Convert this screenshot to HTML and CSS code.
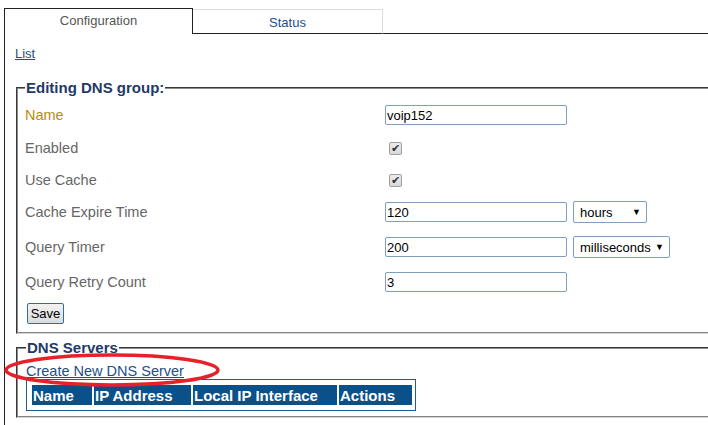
FILE: index.html
```html
<!DOCTYPE html>
<html lang="en">
<head>
  <meta charset="UTF-8" />
  <title>DNS Group</title>
  <link rel="stylesheet" href="styles.css">
</head>
<body>
  <div id="page">
    <!-- Tabs -->
    <div class="tabs">
      <div class="tab tab-active">Configuration</div>
      <div class="tab tab-idle">Status</div>
      <div class="tab-fill"></div>
    </div>

    <div class="panel">
      <a class="link list-link" href="#">List</a>

      <!-- Editing form -->
      <fieldset class="box box-edit">
        <legend>Editing DNS group:</legend>
        <div class="row row-name">
          <label class="lbl lbl-focus">Name</label>
          <input class="txt" type="text" value="voip152">
        </div>
        <div class="row">
          <label class="lbl">Enabled</label>
          <span class="chk">&#10004;</span>
        </div>
        <div class="row">
          <label class="lbl">Use Cache</label>
          <span class="chk">&#10004;</span>
        </div>
        <div class="row">
          <label class="lbl">Cache Expire Time</label>
          <input class="txt" type="text" value="120">
          <div class="sel sel-hours">hours <span class="arrow">&#9660;</span></div>
        </div>
        <div class="row row-tall">
          <label class="lbl">Query Timer</label>
          <input class="txt" type="text" value="200">
          <div class="sel sel-ms">milliseconds <span class="arrow">&#9660;</span></div>
        </div>
        <div class="row">
          <label class="lbl">Query Retry Count</label>
          <input class="txt" type="text" value="3">
        </div>
        <button class="btn">Save</button>
      </fieldset>

      <!-- DNS servers -->
      <fieldset class="box box-servers">
        <legend>DNS Servers</legend>
        <a class="link create-link" href="#">Create New DNS Server</a>
        <table class="grid">
          <tr>
            <th class="c-name">Name</th>
            <th class="c-ip">IP Address</th>
            <th class="c-if">Local IP Interface</th>
            <th class="c-act">Actions</th>
          </tr>
        </table>
        <svg class="mark" width="220" height="40" viewBox="0 0 220 40">
          <ellipse cx="110" cy="18" rx="106" ry="15" fill="none" stroke="#e8202a" stroke-width="3.5"/>
        </svg>
      </fieldset>
    </div>
  </div>
</body>
</html>
```

FILE: styles.css
```css
/* Reset & base */
html, body {
  margin: 0; padding: 0;
  background: white;
  overflow: hidden;
  font-family: "Liberation Sans", Arial, sans-serif;
}
#page {
  width: 708px; height: 425px;
  overflow: hidden;
  padding-top: 8px;
  box-sizing: border-box;
}
/* Tabs */
.tabs {
  display: flex;
  margin-left: 4px;
  height: 26px;
}
.tab {
  box-sizing: border-box;
  text-align: center;
  font-size: 13px;
}
.tab-active {
  width: 189px; height: 26px;
  border: 1px solid #222; border-bottom: none;
  color: #555;
  padding-top: 4px;
}
.tab-idle {
  width: 190px; height: 25px;
  margin-top: 1px;
  border: 1px solid #dcdce2; border-left: none;
  border-bottom: 1px solid #222;
  color: #1d4f86;
  padding-top: 5px;
}
.tab-fill {
  flex: 1;
  border-bottom: 1px solid #222;
}
/* Panel */
.panel {
  position: relative;
  margin-left: 4px;
  width: 760px;
  height: 400px;
  border-left: 1px solid #222;
  padding: 12px 0 0 10px;
  box-sizing: border-box;
}
.link {
  color: #1d4f86;
  text-decoration: underline;
}
.list-link {
  display: block;
  font-size: 13px;
  height: 15px;
}
/* Fieldsets */
.box {
  width: 720px;
  margin: 0 0 0 1px;
  border: 2px groove #d0d0d0;
  border-color: #8c8c8c #d6d6d6 #d6d6d6 #8c8c8c;
  box-sizing: border-box;
}
.box legend {
  color: #1f3a68;
  font-weight: bold;
  font-size: 15px;
  padding: 0 1px;
  margin-left: 0;
}
.box-edit {
  margin-top: 18px;
  padding: 2px 6px 8px 7px;
}
.row {
  display: flex;
  align-items: center;
  height: 32px;
}
.row-name { height: 34px; }
.row-tall { height: 38px; }
.lbl {
  width: 360px;
  color: #666;
  font-size: 14.5px;
}
.lbl-focus { color: #b88d0c; }
.txt {
  width: 182px; height: 20px;
  box-sizing: border-box;
  margin: 0;
  border: 1px solid #7f9fbf;
  border-radius: 2px;
  padding: 0 1px;
  font-family: "Liberation Sans", Arial, sans-serif;
  font-size: 13px;
  color: #000;
}
.chk {
  display: flex;
  align-items: center;
  justify-content: center;
  margin-left: 4px;
  width: 13px; height: 13px;
  box-sizing: border-box;
  border: 1px solid #a0a0a0;
  border-radius: 2px;
  background: linear-gradient(#ececec, #d8d8d8);
  color: #333;
  font-size: 11px;
  line-height: 1;
}
.sel {
  display: flex;
  align-items: center;
  justify-content: space-between;
  height: 22px;
  margin-left: 6px;
  padding: 0 5px 0 6px;
  box-sizing: border-box;
  border: 1px solid #7f9fbf;
  border-radius: 2px;
  font-size: 13px;
  color: #000;
}
.sel-hours { width: 74px; }
.sel-ms { width: 97px; }
.arrow { font-size: 9px; }
.btn {
  margin: 5px 0 0 2px;
  width: 37px; height: 21px;
  padding: 0;
  font-family: "Liberation Sans", Arial, sans-serif;
  font-size: 13px;
  color: #000;
  background: linear-gradient(#f2f2f2, #dcdcdc);
  border: 1px solid #2f6ea5;
  border-radius: 2px;
}
.box-servers {
  position: relative;
  margin-top: 5px;
  padding: 0 6px 5px 8px;
}
.create-link {
  display: block;
  font-size: 14.5px;
  margin-top: 7px;
}
.grid {
  border: 1px solid #1d5c94;
  border-spacing: 2px;
  padding: 3px 1px 3px 3px;
}
.grid th {
  box-sizing: border-box;
  background: #0b5189;
  color: white;
  font-size: 15px;
  font-weight: bold;
  text-align: left;
  height: 20px;
  padding: 0 1px;
}
.c-name { width: 60px; }
.c-ip { width: 97px; }
.c-if { width: 144px; }
.c-act { width: 73px; }
/* Red highlight ring */
.mark {
  position: absolute;
  left: -16px; top: -4px;
}
```
